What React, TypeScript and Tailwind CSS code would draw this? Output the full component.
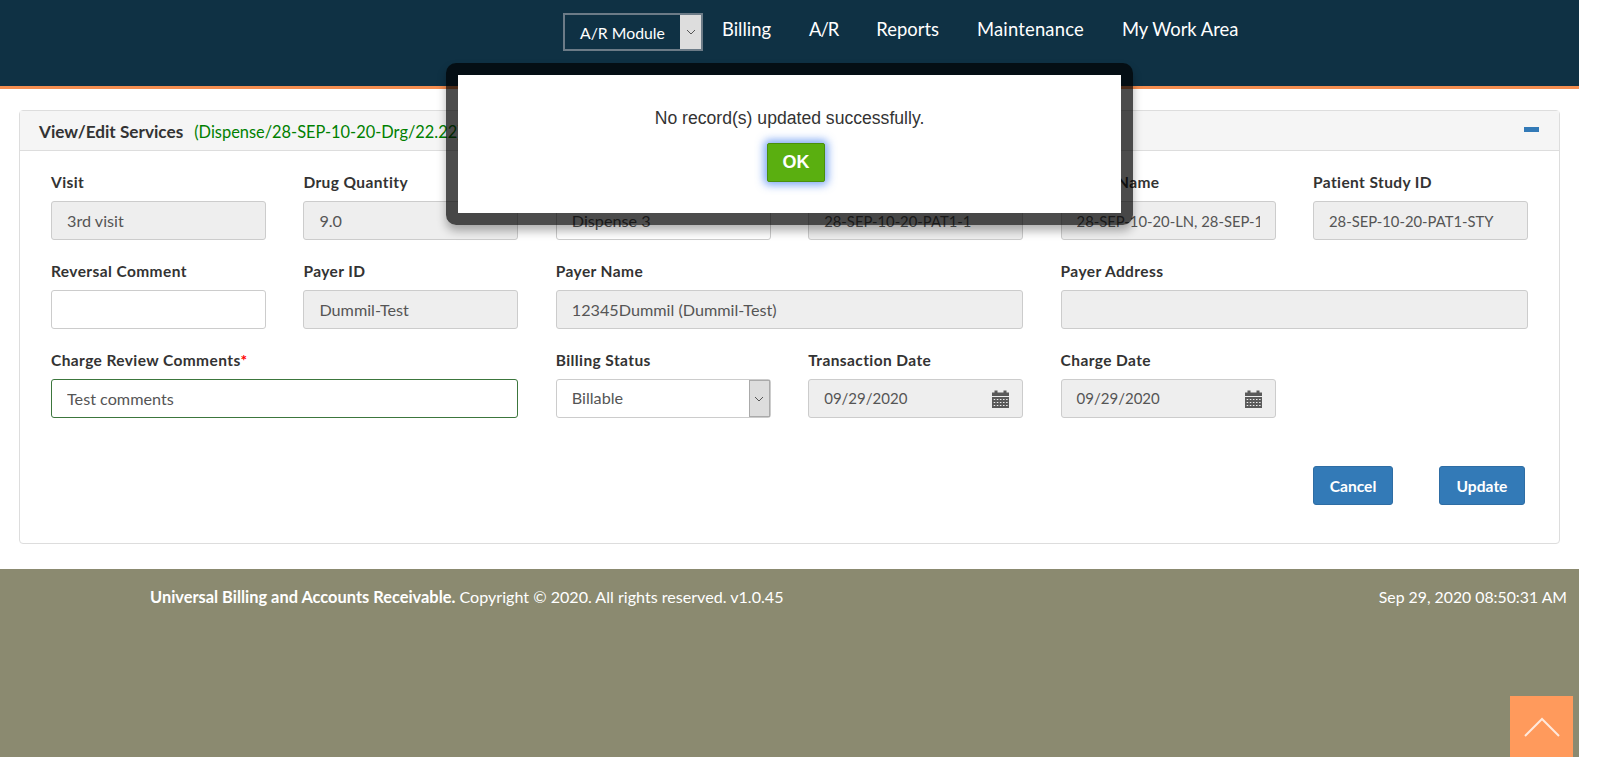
const font = "font-['Lato','Liberation_Sans',sans-serif]";
const labelCls = "mt-[-2px] block h-[24px] text-[15.5px] font-bold leading-[24px] tracking-[0.4px] text-[#333]";

const navItems = ["Billing", "A/R", "Reports", "Maintenance", "My Work Area"];

const Chevron = () => (
  <svg width="10" height="6" viewBox="0 0 10 6" fill="none" stroke="#555" strokeWidth="1">
    <path d="M1 1l4 4 4-4" />
  </svg>
);

const CalendarIcon = () => (
  <svg width="17" height="18" viewBox="0 0 17 18" className="shrink-0">
    <path fill="#5a5a5a" d="M0 2.5h2.5V0.5h3v2h6v-2h3v2H17v3.5H0z" />
    <path fill="#5a5a5a" d="M0 7h17v11H0z" />
    <path stroke="#eee" strokeWidth="1.2" strokeDasharray="1.5 1.6" d="M1.7 9.5h14M1.7 12.5h14M1.7 15.5h14" />
  </svg>
);

const Field = ({
  label,
  value = "",
  disabled = true,
  span,
  required,
  focused,
  code,
}: {
  label: string;
  value?: string;
  disabled?: boolean;
  span?: boolean;
  required?: boolean;
  focused?: boolean;
  code?: boolean;
}) => (
  <div className={span ? "col-span-2" : ""}>
    <label className={labelCls}>
      {label}
      {required && <span className="text-[#f00]">*</span>}
    </label>
    <input
      readOnly
      value={value}
      className={`mt-[7px] block h-[39px] w-full rounded-[3px] border px-[15px] text-[#555] outline-none ${
        code ? "text-[14.8px]" : "text-[16.2px]"
      } ${focused ? "border-[#3c763d]" : "border-[#ccc]"} ${disabled ? "bg-[#eee]" : "bg-white"}`}
    />
  </div>
);

const DateField = ({ label, value }: { label: string; value: string }) => (
  <div>
    <label className={labelCls}>{label}</label>
    <div className="mt-[7px] flex h-[39px] items-center justify-between rounded-[3px] border border-[#ccc] bg-[#eee] pl-[15px] pr-[13px] text-[15px] text-[#555]">
      {value}
      <CalendarIcon />
    </div>
  </div>
);

export default function App() {
  return (
    <div className={`relative h-[757px] w-[1600px] overflow-hidden bg-white ${font}`}>
      <div className="flex h-[757px] w-[1579px] flex-col">
        <header className="flex h-[89px] shrink-0 items-start border-b-[3px] border-[#f68e50] bg-[#0f3144] pl-[563px] pt-[13px]">
          <div className="flex h-[38px] w-[140px] items-stretch border-2 border-[#6c7b87] bg-[#0f3144] text-[15.8px] text-white">
            <span className="flex-1 pl-[15px] pt-[6px]">A/R Module</span>
            <span className="flex w-[21px] items-center justify-center bg-[#ddd]">
              <Chevron />
            </span>
          </div>
          <nav className="ml-[19px] flex gap-[38px] text-[18.4px] leading-[32px] text-white">
            {navItems.map((item) => (
              <a key={item} className={item === "A/R" ? "tracking-[-1px]" : item === "Maintenance" ? "tracking-[0.2px]" : ""}>
                {item}
              </a>
            ))}
          </nav>
        </header>

        <main className="flex-1 px-[19px] pt-[21px]">
          <section className="h-[434px] rounded-[4px] border border-[#ddd]">
            <div className="flex h-[40px] items-center justify-between border-b border-[#ddd] bg-[#f5f5f5] pl-[19px] pr-[20px]">
              <div className="pt-[2px]">
                <b className="text-[17.2px] font-bold text-[#333]">View/Edit Services</b>
                <span className="ml-[11px] text-[16.4px] text-[#008000]">(Dispense/28-SEP-10-20-Drg/22.22)</span>
              </div>
              <span className="mb-[3px] h-[5px] w-[15px] bg-[#337ab7]" />
            </div>

            <div className="px-[31px] pt-[21px]">
              <div className="grid grid-cols-6 gap-x-[37.4px] gap-y-[21px]">
                <Field label="Visit" value="3rd visit" />
                <Field label="Drug Quantity" value="9.0" />
                <Field label="Service" value="Dispense 3" disabled={false} />
                <Field label="Patient ID" value="28-SEP-10-20-PAT1-1" code />
                <Field label="Patient Name" value="28-SEP-10-20-LN, 28-SEP-10-20-FN" code />
                <Field label="Patient Study ID" value="28-SEP-10-20-PAT1-STY" code />

                <Field label="Reversal Comment" disabled={false} />
                <Field label="Payer ID" value="Dummil-Test" />
                <Field label="Payer Name" value="12345Dummil (Dummil-Test)" span />
                <Field label="Payer Address" span />

                <Field label="Charge Review Comments" value="Test comments" disabled={false} span required focused />
                <div>
                  <label className={labelCls}>Billing Status</label>
                  <div className="mt-[7px] flex h-[39px] items-stretch rounded-[3px] border border-[#ccc] bg-white text-[16.2px] text-[#555]">
                    <span className="flex flex-1 items-center pl-[15px]">Billable</span>
                    <span className="flex w-[21px] items-center justify-center border border-[#aaa] bg-[#ddd]">
                      <Chevron />
                    </span>
                  </div>
                </div>
                <DateField label="Transaction Date" value="09/29/2020" />
                <DateField label="Charge Date" value="09/29/2020" />
              </div>

              <div className="mt-[48px] flex justify-end gap-[46px] pr-[3px]">
                <button className="h-[39px] w-[80px] rounded-[3px] border border-[#2e6da4] bg-[#337ab7] pt-[3px] text-[15.6px] font-bold text-white">
                  Cancel
                </button>
                <button className="h-[39px] w-[86px] rounded-[3px] border border-[#2e6da4] bg-[#337ab7] pt-[3px] text-[15.6px] font-bold text-white">
                  Update
                </button>
              </div>
            </div>
          </section>
        </main>

        <footer className="flex h-[188px] shrink-0 items-start justify-between bg-[#8b8a70] pl-[150px] pr-[12px] pt-[18px] leading-[20px] text-white">
          <p className="text-[16.1px]">
            <b className="text-[16.4px] font-bold">Universal Billing and Accounts Receivable.</b> Copyright © 2020. All rights reserved. v1.0.45
          </p>
          <p className="text-[15.8px]">Sep 29, 2020 08:50:31 AM</p>
        </footer>
      </div>

      {/* back to top, fixed over the footer */}
      <a className="absolute left-[1510px] top-[696px] flex h-[61px] w-[63px] items-center justify-center bg-[#ff9a5c]">
        <svg width="36" height="20" viewBox="0 0 36 20" fill="none" stroke="#ffe9dc" strokeWidth="2">
          <path d="M1 19L18 2l17 17" />
        </svg>
      </a>

      {/* alert dialog */}
      <div className="absolute left-[446px] top-[63px] w-[687px] rounded-[10px] border-[12px] border-[rgba(0,0,0,0.7)] bg-clip-padding shadow-[0_6px_10px_rgba(0,0,0,0.3)]">
        <div className="flex h-[138px] flex-col items-center bg-white font-['Liberation_Sans',sans-serif]">
          <p className="mt-[32px] text-[17.6px] leading-[22px] text-[#333]">No record(s) updated successfully.</p>
          <button className="ml-[13px] mt-[14px] h-[39px] w-[58px] rounded-[2px] border border-[#4a8f0c] bg-[#5aaf10] text-[18px] font-bold text-white shadow-[0_0_8px_3px_rgba(70,130,240,0.7)]">
            OK
          </button>
        </div>
      </div>
    </div>
  );
}
